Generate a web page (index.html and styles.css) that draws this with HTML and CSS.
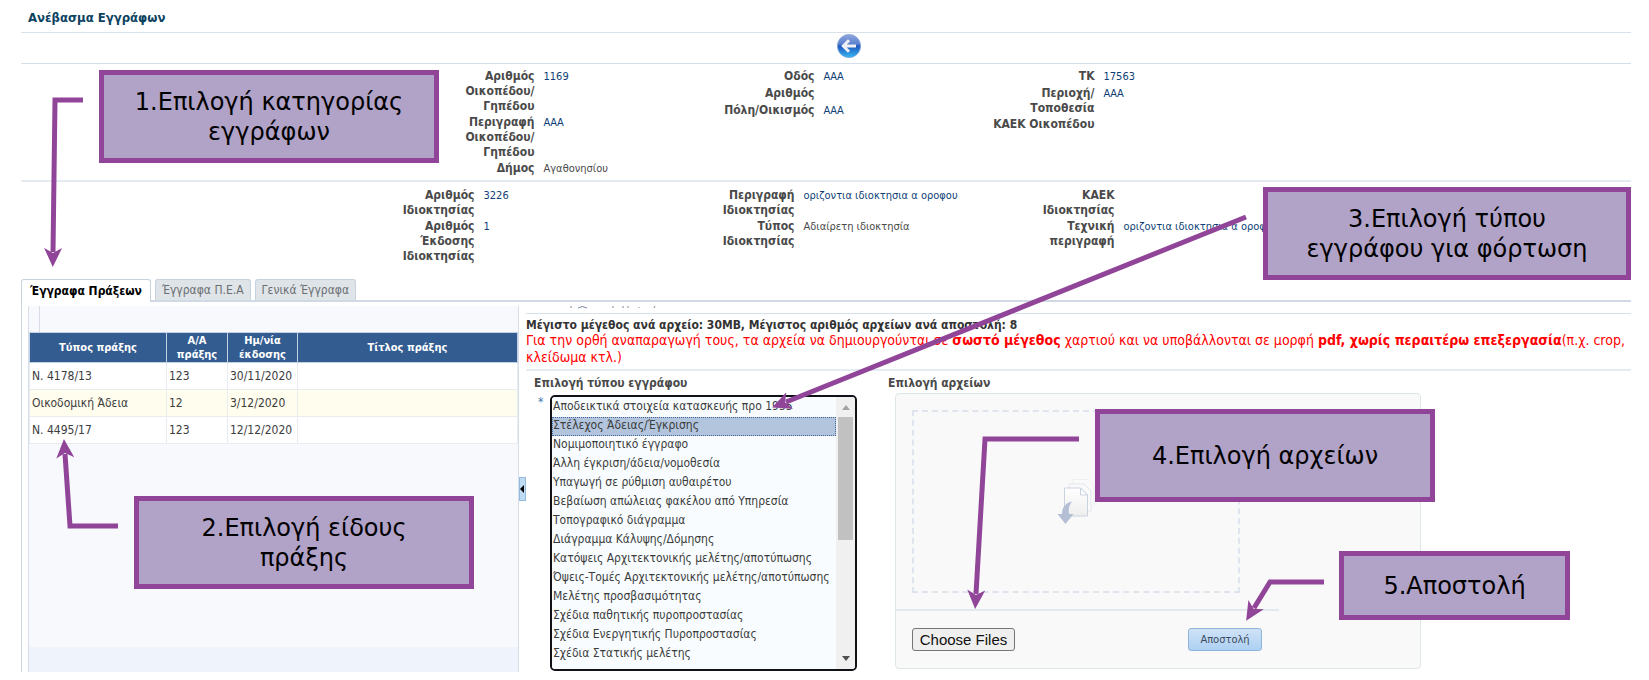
FILE: index.html
```html
<!DOCTYPE html>
<html lang="el">
<head>
<meta charset="utf-8">
<title>Ανέβασμα Εγγράφων</title>
<link rel="stylesheet" href="styles.css">
</head>
<body>
<main class="page">
  <h1 class="title">Ανέβασμα Εγγράφων</h1>
  <div class="toolbar">
    <button class="back" type="button" aria-label="Επιστροφή">
      <svg width="24" height="24" viewBox="0 0 24 24" aria-hidden="true">
        <defs>
          <linearGradient id="ball" x1="0" y1="0" x2="0" y2="1">
            <stop offset="0" stop-color="#8fa6dc"/><stop offset=".42" stop-color="#5b80cf"/>
            <stop offset=".5" stop-color="#1f57bf"/><stop offset="1" stop-color="#35b8f0"/>
          </linearGradient>
        </defs>
        <circle cx="12" cy="12" r="11.6" fill="url(#ball)" stroke="#7fa3da" stroke-width=".8"/>
        <path d="M12 6.2 6.3 12l5.700 5.800M6.800 12H19" fill="none" stroke="#eef0f4" stroke-width="3"/>
      </svg>
    </button>
  </div>

  <section class="fields plot">
    <dl class="group">
      <div class="field"><dt>Αριθμός<br>Οικοπέδου/<br>Γηπέδου</dt><dd>1169</dd></div>
      <div class="field"><dt>Περιγραφή<br>Οικοπέδου/<br>Γηπέδου</dt><dd>ΑΑΑ</dd></div>
      <div class="field"><dt>Δήμος</dt><dd class="plain">Αγαθονησίου</dd></div>
    </dl>
    <dl class="group">
      <div class="field"><dt>Οδός</dt><dd>ΑΑΑ</dd></div>
      <div class="field"><dt>Αριθμός</dt><dd></dd></div>
      <div class="field"><dt>Πόλη/Οικισμός</dt><dd>ΑΑΑ</dd></div>
    </dl>
    <dl class="group">
      <div class="field"><dt>ΤΚ</dt><dd>17563</dd></div>
      <div class="field"><dt>Περιοχή/<br>Τοποθεσία</dt><dd>ΑΑΑ</dd></div>
      <div class="field"><dt>ΚΑΕΚ Οικοπέδου</dt><dd></dd></div>
    </dl>
  </section>

  <section class="fields property">
    <dl class="group">
      <div class="field"><dt>Αριθμός<br>Ιδιοκτησίας</dt><dd>3226</dd></div>
      <div class="field"><dt>Αριθμός<br>Έκδοσης<br>Ιδιοκτησίας</dt><dd>1</dd></div>
    </dl>
    <dl class="group">
      <div class="field"><dt>Περιγραφή<br>Ιδιοκτησίας</dt><dd>οριζοντια ιδιοκτησια α οροφου</dd></div>
      <div class="field"><dt>Τύπος<br>Ιδιοκτησίας</dt><dd class="plain">Αδιαίρετη ιδιοκτησία</dd></div>
    </dl>
    <dl class="group">
      <div class="field"><dt>ΚΑΕΚ<br>Ιδιοκτησίας</dt><dd></dd></div>
      <div class="field"><dt>Τεχνική<br>περιγραφή</dt><dd>οριζοντια ιδιοκτησια α οροφου</dd></div>
    </dl>
  </section>

  <div class="tabs" role="tablist">
    <button class="tab active" type="button" role="tab" aria-selected="true">Έγγραφα Πράξεων</button>
    <button class="tab" type="button" role="tab" aria-selected="false">Έγγραφα Π.Ε.Α</button>
    <button class="tab" type="button" role="tab" aria-selected="false">Γενικά Έγγραφα</button>
  </div>

  <div class="content">
    <section class="deeds">
      <div class="deeds-bar"></div>
      <table class="grid">
        <colgroup><col class="c-type"><col class="c-num"><col class="c-date"><col></colgroup>
        <thead><tr><th>Τύπος πράξης</th><th>Α/Α<br>πράξης</th><th>Ημ/νία<br>έκδοσης</th><th>Τίτλος πράξης</th></tr></thead>
        <tbody>
          <tr><td>Ν. 4178/13</td><td>123</td><td>30/11/2020</td><td></td></tr>
          <tr><td>Οικοδομική Άδεια</td><td>12</td><td>3/12/2020</td><td></td></tr>
          <tr><td>Ν. 4495/17</td><td>123</td><td>12/12/2020</td><td></td></tr>
        </tbody>
      </table>
      <div class="deeds-foot"></div>
    </section>
    <button class="splitter" type="button" aria-label="Σύμπτυξη">
      <svg width="4" height="8" viewBox="0 0 4 8" aria-hidden="true"><path d="M4 0v8L0 4z" fill="#000"/></svg>
    </button>
    <section class="upload">
      <div class="upload-top">
        <svg width="140" height="4" viewBox="0 0 140 4" aria-hidden="true">
          <path d="M45 0v2M52 2q4-3 9 0M87 0v2M97 0v2M102 0v2M113 1v1M129 0l-1 2" fill="none" stroke="#7b8ba0"/>
        </svg>
      </div>
      <div class="notice">
        <p class="limits">Μέγιστο μέγεθος ανά αρχείο: 30MB, Μέγιστος αριθμός αρχείων ανά αποστολή: 8</p>
        <p class="warn">Για την ορθή αναπαραγωγή τους, τα αρχεία να δημιουργούνται σε <b>σωστό μέγεθος</b> χαρτιού και να υποβάλλονται σε μορφή <b>pdf, χωρίς περαιτέρω επεξεργασία</b>(π.χ. crop,<br>κλείδωμα κτλ.)</p>
      </div>
      <form class="form">
        <div class="types">
          <label class="label" for="doctype">Επιλογή τύπου εγγράφου</label>
          <div class="types-row">
            <span class="req">*</span>
            <div class="listbox">
              <select id="doctype" size="14">
                <option>Αποδεικτικά στοιχεία κατασκευής προ 1955</option>
                <option class="current">Στέλεχος Άδειας/Έγκρισης</option>
                <option>Νομιμοποιητικό έγγραφο</option>
                <option>Άλλη έγκριση/άδεια/νομοθεσία</option>
                <option>Υπαγωγή σε ρύθμιση αυθαιρέτου</option>
                <option>Βεβαίωση απώλειας φακέλου από Υπηρεσία</option>
                <option>Τοπογραφικό διάγραμμα</option>
                <option>Διάγραμμα Κάλυψης/Δόμησης</option>
                <option>Κατόψεις Αρχιτεκτονικής μελέτης/αποτύπωσης</option>
                <option>Όψεις-Τομές Αρχιτεκτονικής μελέτης/αποτύπωσης</option>
                <option>Μελέτης προσβασιμότητας</option>
                <option>Σχέδια παθητικής πυροπροστασίας</option>
                <option>Σχέδια Ενεργητικής Πυροπροστασίας</option>
                <option>Σχέδια Στατικής μελέτης</option>
              </select>
              <div class="scroll" aria-hidden="true">
                <svg width="8" height="5" viewBox="0 0 8 5"><path d="M0 5h8L4 0z" fill="#a3a3a3"/></svg>
                <div class="thumb"></div>
                <svg width="8" height="5" viewBox="0 0 8 5"><path d="M0 0h8L4 5z" fill="#505050"/></svg>
              </div>
            </div>
          </div>
        </div>
        <div class="files">
          <label class="label" for="files">Επιλογή αρχείων</label>
          <div class="filebox">
            <div class="drop">
              <svg width="38" height="48" viewBox="0 0 38 48" aria-hidden="true">
                <defs><linearGradient id="sheet" x1="0" y1="0" x2="0" y2="1"><stop offset="0" stop-color="#fff"/><stop offset="1" stop-color="#eeeeef"/></linearGradient></defs>
                <g stroke-linejoin="round" fill="#fafafa">
                  <path d="M16 1.500h15l6 6V28H16z" stroke="#eef0f3"/>
                  <path d="M12 6h15l7 7v20H12z" stroke="#e2e6ec"/>
                  <path d="M7.500 10h16l7 7v21h-23z" fill="url(#sheet)" stroke="#cbd2df"/>
                  <path d="M23.500 10v7h7z" fill="#fff" stroke="#cbd2df"/>
                </g>
                <path d="M15 23.500C8 25 5 30 5 36H.5l8 10 8-10H12c-.8-5 .2-9 3-12.500z" fill="#b4bfd6"/>
              </svg>
            </div>
            <div class="actions">
              <input class="choose" id="files" type="file" multiple>
              <button class="send" type="button">Αποστολή</button>
            </div>
          </div>
        </div>
      </form>
    </section>
  </div>

  <svg class="arrows" width="1649" height="680" viewBox="0 0 1649 680" aria-hidden="true">
    <defs>
      <marker id="tip" markerUnits="userSpaceOnUse" markerWidth="20" markerHeight="20" refX="4" refY="10" orient="auto">
        <path d="M0 1 19 10 0 19 5 10z" fill="#914599"/>
      </marker>
    </defs>
    <g fill="none" stroke="#914599" stroke-width="5">
      <path d="M83 100H55L53 252" marker-end="url(#tip)"/>
      <path d="M118 526H70L65 454" marker-end="url(#tip)"/>
      <path d="M1246 217 786 402" marker-end="url(#tip)"/>
      <path d="M1079 439H985L976 594" marker-end="url(#tip)"/>
      <path d="M1324 582H1270L1254 608" marker-end="url(#tip)"/>
    </g>
  </svg>
  <div class="callout n1">1.Επιλογή κατηγορίας<br>εγγράφων</div>
  <div class="callout n2">2.Επιλογή είδους<br>πράξης</div>
  <div class="callout n3">3.Επιλογή τύπου<br>εγγράφου για φόρτωση</div>
  <div class="callout n4">4.Επιλογή αρχείων</div>
  <div class="callout n5">5.Αποστολή</div>
</main>
</body>
</html>
```
FILE: styles.css
```css
* { box-sizing: border-box; }
body {
  margin: 0;
  background: #fff;
  color: #3c3c3c;
  font: 12px/15px "DejaVu Sans Condensed", "DejaVu Sans", sans-serif;
}
h1, p, dl, dd { margin: 0; }
button, select, input { font: inherit; }
.page { position: relative; min-height: 100vh; padding: 0 18px 8px 21px; display: flex; flex-direction: column; overflow: hidden; }

.title { padding: 10px 7px 6px; font-size: 13px; line-height: 16px; color: #0b4260; }
.toolbar { display: flex; justify-content: center; height: 32px; padding: 1px 0 0 46px; border-top: 1px solid #d9e1ea; border-bottom: 1px solid #d3dee8; }
.back { width: 24px; height: 24px; padding: 0; border: 0; background: none; }
.back svg { display: block; }

.fields { display: flex; justify-content: center; padding-right: 3px; }
.plot { min-height: 118px; padding-top: 5px; border-bottom: 2px solid #e4ebf2; }
.property { min-height: 97px; padding-top: 6px; }
.group { width: 280px; }
.property .group { width: 320px; }
.field { display: flex; gap: 9px; min-height: 17px; padding-bottom: 1px; }
dt { width: 130px; flex: none; text-align: right; font-weight: bold; color: #4a4a4a; }
dd { font-size: 11px; color: #0f3f77; white-space: nowrap; }
dd.plain { color: #4a4a4a; }

.tabs { display: flex; gap: 4px; height: 23px; border-bottom: 2px solid #d0d9e4; }
.tab { height: 21px; padding: 0 6px; border: 1px solid #c6d2de; border-bottom: 0; border-radius: 3px 3px 0 0; background: #dee4e8; color: #6a6e71; font-size: 12px; line-height: 20px; white-space: nowrap; }
.tab.active { height: 23px; padding: 0 8px; background: #fff; color: #000; font-weight: bold; }

.content { flex: 1; display: flex; padding: 4px 0 0 6px; border-left: 1px solid #c9d5e1; }
.deeds { width: 491px; flex: none; display: flex; flex-direction: column; background: #f7f9fd; border-right: 1px solid #d6dfe9; border-left: 1px solid #d6dfe9; }
.deeds-bar { height: 26px; margin-left: 10px; border-left: 1px solid #d6dde6; }
.deeds-foot { height: 25px; margin-top: auto; background: #eff3fb; }
.grid { width: 100%; table-layout: fixed; border-collapse: collapse; }
.c-type { width: 137px; }
.c-num { width: 61px; }
.c-date { width: 70px; }
.grid th { height: 30px; padding: 0; border: 1px solid #c3d2e3; background: #335c91; color: #fff; font-size: 11px; line-height: 14px; }
.grid td { height: 27px; padding: 0 2px; border: 1px solid #e8ebef; background: #fff; white-space: nowrap; }
.grid tr:nth-child(2) td { background: #fffdee; }
.splitter { width: 7px; height: 24px; flex: none; align-self: center; padding: 0; border: 1px solid #93b9dc; background: #bfdcf5; display: flex; align-items: center; }

.upload { flex: 1; min-width: 0; }
.upload-top { height: 8px; border-bottom: 1px solid #d8e1ea; }
.upload-top svg { display: block; }
.notice { padding: 4px 0 3px; border-bottom: 2px solid #e4ebf2; }
.limits { font-weight: bold; line-height: 14px; color: #333; white-space: nowrap; }
.warn { color: #f00; font-size: 14px; line-height: 17px; white-space: nowrap; }
.form { display: flex; gap: 31px; padding: 5px 0 0 8px; }
.label { display: block; font-weight: bold; line-height: 15px; color: #4a4a4a; }
.types { width: 323px; }
.types-row { display: flex; justify-content: space-between; padding: 4px 0 0 4px; }
.req { color: #3f7aa8; }
.listbox { display: flex; width: 307px; height: 276px; border: 2px solid #101218; border-radius: 5px; background: #f8fcff; overflow: hidden; }
select { flex: 1; min-width: 0; height: 272px; padding: 1px 0; border: 0; outline: 0; background: #f8fcff; color: #3c3c3c; overflow: hidden; scrollbar-width: none; }
option { height: 19px; min-height: 19px; padding: 1px 1px; line-height: 17px; }
option.current { background: #b2c5dd; outline: 1px dotted #3f6499; outline-offset: -1px; }
.scroll { width: 19px; display: flex; flex-direction: column; align-items: center; padding: 8px 2px; background: #f0f0f0; }
.thumb { width: 15px; height: 123px; margin: 7px 0 auto; background: #c1c1c1; }

.filebox { width: 526px; height: 276px; margin: 2px 0 0 7px; border: 1px solid #dde5e8; border-radius: 4px; background: #f9f9f9; }
.drop { display: flex; align-items: center; justify-content: center; width: 328px; height: 183px; margin: 16px 0 0 16px; border: 2px dashed #dfe5ee; }
.actions { display: flex; justify-content: space-between; width: 383px; margin-top: 16px; padding: 17px 17px 0 16px; border-top: 2px solid #e2e9ef; }
.choose { width: 103px; height: 23px; overflow: hidden; color: transparent; }
.choose::file-selector-button { width: 103px; height: 23px; margin: 0; padding: 0; border: 1px solid #767676; border-radius: 3px; background: #efefef; color: #111; font: 15px/19px "Liberation Sans", sans-serif; }
.send { width: 74px; height: 23px; padding: 0; border: 1px solid #8fb5da; border-radius: 3px; background: linear-gradient(#cfe3f7, #add0f2); color: #3b4a5c; font-size: 11px; }

.arrows { position: absolute; left: 0; top: 0; pointer-events: none; }
.callout { position: absolute; display: flex; align-items: center; justify-content: center; width: 340px; height: 93px; border: 5px solid #914599; background: #b1a2c7; color: #000; font: 24px/30px "DejaVu Sans", sans-serif; text-align: center; white-space: nowrap; }
.n1 { left: 99px; top: 70px; }
.n2 { left: 134px; top: 496px; }
.n3 { left: 1263px; top: 187px; width: 368px; }
.n4 { left: 1095px; top: 409px; }
.n5 { left: 1339px; top: 551px; width: 231px; height: 69px; }
```
